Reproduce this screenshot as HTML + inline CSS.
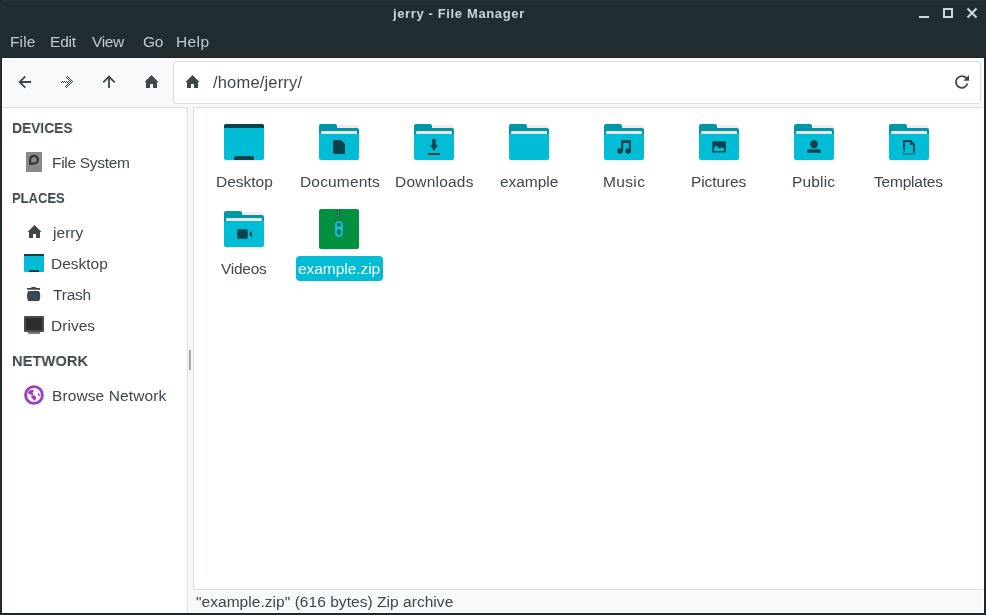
<!DOCTYPE html>
<html><head><meta charset="utf-8">
<style>
html,body{margin:0;padding:0;}
body{width:986px;height:615px;overflow:hidden;position:relative;background:#222d32;font-family:"Liberation Sans",sans-serif;}
.a{position:absolute;}
.t{position:absolute;white-space:nowrap;will-change:transform;}
#frame{left:1px;top:57px;width:984px;height:557px;background:#1a2328;}
#content{left:2px;top:58px;width:982px;height:555px;background:#fff;}
#toolbar{left:3px;top:59px;width:980px;height:48px;background:#f8f9fb;}
#entry{left:173px;top:61px;width:808px;height:43px;box-sizing:border-box;border:1px solid #dcdfe1;border-radius:3px;background:#fff;}
#side{left:2px;top:107px;width:185px;height:506px;background:#fff;}
#sidetop{left:3px;top:107px;width:185px;height:1px;background:#dcdfe1;}
#sideb{left:187px;top:107px;width:1px;height:506px;background:#dcdfe1;}
#gap{left:188px;top:107px;width:5px;height:506px;background:#f8f9fb;}
#handle{left:189px;top:350px;width:2px;height:20px;background:#a2a8ab;}
#view{left:193px;top:107px;width:790px;height:483px;background:#fff;border-left:1px solid #dcdfe1;border-top:1px solid #dcdfe1;border-bottom:1px solid #dcdfe1;box-sizing:border-box;}
#status{left:188px;top:590px;width:795px;height:22px;background:#f8f9fb;}
</style></head><body>
<svg width="0" height="0" style="position:absolute">
<defs>
<g id="fold">
<rect x="0.5" y="1" width="39" height="36" rx="2" fill="rgba(120,60,60,0.10)"/>
<path d="M0 2A2 2 0 0 1 2 0H16A2 2 0 0 1 18 2V4H38A2 2 0 0 1 40 6V12H0Z" fill="#0097a7"/>
<path d="M2 8A1 1 0 0 1 3 7H37A1 1 0 0 1 38 8V12H2Z" fill="#e7e5e5"/>
<path d="M0 10H40V34A2 2 0 0 1 38 36H2A2 2 0 0 1 0 34Z" fill="#00bcd4"/>
</g>
<path id="home" d="M7.5 1L0.5 8H2V14H6V10H9V14H13V8H14.5Z"/>
</defs>
</svg>
<div class="a" style="left:0;top:0;width:986px;height:1px;background:#2a353a"></div>
<div class="a" style="left:0;top:0;width:1px;height:1px;background:#000"></div>
<div class="a" style="left:985px;top:0;width:1px;height:1px;background:#000"></div>
<!-- window buttons -->
<div class="a" style="left:919px;top:16px;width:10px;height:2px;background:#d0d7da"></div>
<div class="a" style="left:943px;top:8px;width:10px;height:10px;box-sizing:border-box;border:2px solid #d0d7da"></div>
<svg class="a" style="left:966px;top:7px" width="12" height="12" viewBox="0 0 12 12"><path d="M1.5 1.5L10.5 10.5M10.5 1.5L1.5 10.5" stroke="#d0d7da" stroke-width="2" stroke-linecap="butt"/></svg>

<div class="a" id="frame"></div>
<div class="a" id="content"></div>
<div class="a" id="toolbar"></div>
<div class="a" id="entry"></div>

<!-- toolbar icons -->
<svg class="a" style="left:13px;top:70px" width="24" height="24" viewBox="0 0 24 24"><path d="M12.3 6.3L6.6 12L12.3 17.7M6.6 12H18" fill="none" stroke="#3d474d" stroke-width="1.8"/></svg>
<svg class="a" style="left:55px;top:70px" width="24" height="24" viewBox="0 0 24 24"><defs><pattern id="chk" patternUnits="userSpaceOnUse" width="2" height="2"><rect x="0" y="0" width="1" height="1" fill="#3d474d"/><rect x="1" y="1" width="1" height="1" fill="#3d474d"/></pattern></defs><path d="M11.2 6.6L16.6 12L11.2 17.4M16.6 12H6" fill="none" stroke="url(#chk)" stroke-width="2.4" shape-rendering="crispEdges"/></svg>
<svg class="a" style="left:97px;top:70px" width="24" height="24" viewBox="0 0 24 24"><path d="M6.3 12.3L12 6.6L17.7 12.3M12 6.6V18" fill="none" stroke="#3d474d" stroke-width="1.8"/></svg>
<svg class="a" style="left:144px;top:74px" width="15" height="14" viewBox="0 0 15 14"><use href="#home" fill="#3d474d"/></svg>
<svg class="a" style="left:185px;top:74px" width="15" height="14" viewBox="0 0 15 14"><use href="#home" fill="#3d474d"/></svg>
<svg class="a" style="left:950px;top:70px" width="24" height="24" viewBox="0 0 24 24"><path d="M16.4 8.2A5.9 5.9 0 1 0 17.5 13.6" fill="none" stroke="#3d474d" stroke-width="1.8"/><path d="M19 5V10.7H13.3Z" fill="#3d474d"/></svg>

<div class="a" id="side"></div>
<div class="a" id="sidetop"></div>
<div class="a" id="sideb"></div>
<div class="a" id="gap"></div>
<div class="a" id="handle"></div>
<div class="a" id="view"></div>
<div class="a" id="status"></div>

<!-- sidebar icons -->
<svg class="a" style="left:22px;top:148px" width="24" height="28" viewBox="0 0 24 28">
<rect x="4" y="4" width="16" height="20" fill="#8a8a8a"/>
<path d="M8.1 15.7V11.8A3.9 3.9 0 1 1 12 15.7Z" fill="none" stroke="#333" stroke-width="2.2"/>
</svg>
<svg class="a" style="left:27px;top:224px" width="15" height="14" viewBox="0 0 15 14"><use href="#home" fill="#3d474d"/></svg>
<svg class="a" style="left:24px;top:254px" width="20" height="18" viewBox="0 0 20 18">
<rect x="0" y="0" width="20" height="18" rx="1" fill="#00bcd4"/>
<path d="M0 1A1 1 0 0 1 1 0H19A1 1 0 0 1 20 1V2H0Z" fill="#06434d"/>
<path d="M5 18V17A1 1 0 0 1 6 16H14A1 1 0 0 1 15 17V18Z" fill="#06434d"/>
</svg>
<svg class="a" style="left:22px;top:282px" width="24" height="24" viewBox="0 0 24 24">
<path d="M9.2 6.1A1 1 0 0 1 10.2 4.9H13.1A1 1 0 0 1 14.1 6.1H18V7.8H5.1V6.1Z" fill="#3d484e"/>
<path d="M6.3 9H17A3 6 0 0 1 17 18.9H6.3A3 6 0 0 1 6.3 9Z" fill="#3d484e"/>
</svg>
<svg class="a" style="left:24px;top:316px" width="20" height="18" viewBox="0 0 20 18">
<rect x="0" y="0" width="20" height="16" rx="1" fill="#4b4b4b"/>
<rect x="2" y="2" width="16" height="12" fill="#2e2e2e"/>
<rect x="4.2" y="16" width="11.8" height="2" fill="#7b7b7b"/>
</svg>
<svg class="a" style="left:24px;top:385px" width="20" height="20" viewBox="0 0 20 20">
<circle cx="10" cy="10" r="8.4" fill="none" stroke="#9b40c4" stroke-width="2.9"/>
<path d="M4 7.4L5.8 5.3L9.2 4.6L9.7 6.5L8.3 7.6L9.7 9.2L8.8 10.1L6.5 9.7L4 8.1Z" fill="#9b40c4"/>
<path d="M7.1 11L9.7 10.1L11.9 11.5L12.2 13.8L10.6 15.6L9.7 16L9.2 14.2L7.6 12.9Z" fill="#9b40c4"/>
<path d="M14 7.8L15.6 9.2L16 11.5L14.4 10.6L13.8 9.2Z" fill="#9b40c4"/>
</svg>

<!-- view icons -->
<svg class="a" style="left:224px;top:124px" width="40" height="37" viewBox="0 0 40 37">
<rect x="0.5" y="1" width="39" height="36" rx="2" fill="rgba(120,60,60,0.12)"/>
<rect x="0" y="0" width="40" height="36" rx="2" fill="#00bcd4"/>
<path d="M0 2A2 2 0 0 1 2 0H38A2 2 0 0 1 40 2V4H0Z" fill="#06434d"/>
<path d="M10 36V34A2 2 0 0 1 12 32H28A2 2 0 0 1 30 34V36Z" fill="#06434d"/>
</svg>
<svg class="a" style="left:319px;top:124px" width="40" height="37" viewBox="0 0 40 37"><use href="#fold"/>
<path d="M14 17A1 1 0 0 1 15 16H22L26 20V29A1 1 0 0 1 25 30H15A1 1 0 0 1 14 29Z" fill="#06434d"/></svg>
<svg class="a" style="left:414px;top:124px" width="40" height="37" viewBox="0 0 40 37"><use href="#fold"/>
<path d="M18.2 15H21.8V21H24L20 27L16 21H18.2Z" fill="#06434d"/><rect x="14" y="29" width="12" height="2" fill="#06434d"/></svg>
<svg class="a" style="left:509px;top:124px" width="40" height="37" viewBox="0 0 40 37"><use href="#fold"/></svg>
<svg class="a" style="left:604px;top:124px" width="40" height="37" viewBox="0 0 40 37"><use href="#fold"/>
<path d="M17.2 27V17A1 1 0 0 1 18.2 16H25.9A1 1 0 0 1 26.9 17V27H24.8V19H19.2V27Z" fill="#06434d"/>
<circle cx="16" cy="27" r="2.8" fill="#06434d"/><circle cx="24.1" cy="27" r="2.8" fill="#06434d"/></svg>
<svg class="a" style="left:699px;top:124px" width="40" height="37" viewBox="0 0 40 37"><use href="#fold"/>
<rect x="13.2" y="17.2" width="13.7" height="11.4" rx="1" fill="#06434d"/>
<path d="M15 27V24L17.4 21.4L20.6 24.4L22.9 23.2L25 24.6V27Z" fill="#00bcd4"/></svg>
<svg class="a" style="left:794px;top:124px" width="40" height="37" viewBox="0 0 40 37"><use href="#fold"/>
<path d="M20 16.1C22.4 16.1 23.8 18 23.8 20.3C23.8 22.6 22 24.6 20 24.6C18 24.6 16.2 22.6 16.2 20.3C16.2 18 17.6 16.1 20 16.1Z" fill="#06434d"/>
<path d="M13.2 28.8V27C13.2 25.8 15.5 25.2 17.5 25.1C18.2 25.6 19 25.9 20 25.9C21 25.9 21.8 25.6 22.5 25.1C24.5 25.2 26.9 25.8 26.9 27V28.8Z" fill="#06434d"/></svg>
<svg class="a" style="left:889px;top:124px" width="40" height="37" viewBox="0 0 40 37"><use href="#fold"/>
<defs><pattern id="chk2" patternUnits="userSpaceOnUse" width="2" height="2"><rect x="0" y="0" width="1" height="1" fill="#06434d"/><rect x="1" y="1" width="1" height="1" fill="#06434d"/></pattern></defs>
<path d="M14 16H21.6L26 20.4V28.5H24.1V21.2L20.8 17.9H15.9V25H14Z" fill="#06434d"/>
<path d="M21 16V21H26V20.4L21.6 16Z" fill="#06434d"/>
<path d="M14 25H16V29H26V31H14Z" fill="url(#chk2)"/>
</svg>
<svg class="a" style="left:224px;top:211px" width="40" height="37" viewBox="0 0 40 37"><use href="#fold"/>
<rect x="13.2" y="18.2" width="10.5" height="9.5" rx="1.2" fill="#06434d"/>
<path d="M25 23.2L28 19.9V26.5Z" fill="#06434d"/></svg>
<svg class="a" style="left:319px;top:209px" width="40" height="41" viewBox="0 0 40 41">
<rect x="0.5" y="1" width="39" height="40" rx="2" fill="rgba(0,0,0,0.1)"/>
<rect x="0" y="0" width="40" height="40" rx="2" fill="#03913f"/>
<rect x="18.6" y="0" width="2.2" height="12" fill="#0a5a40"/>
<path d="M19 0h1v1h-1zM19 2h1v1h-1zM19 4h1v1h-1zM19 6h1v1h-1zM19 8h1v1h-1zM19 10h1v1h-1z" fill="#1ec0dc"/>
<rect x="16.4" y="12.6" width="7.6" height="16" rx="3.8" fill="#0a6a40" opacity="0.6"/>
<rect x="16.1" y="12.1" width="7.7" height="16" rx="3.85" fill="#17bfdc"/>
<ellipse cx="19.95" cy="15.6" rx="2.05" ry="1.95" fill="#0b7444"/>
<ellipse cx="19.95" cy="23" rx="2.05" ry="2.85" fill="#0b7444"/>
</svg>
<div class="a" style="left:296px;top:256px;width:87px;height:25px;background:#00bcd4;border-radius:4px"></div>

<div class="t" style="left:392.80px;top:7.00px;font-size:13px;line-height:13px;color:#cdd4d7;font-weight:bold;letter-spacing:0.632px;">jerry - File Manager</div>
<div class="t" style="left:9.68px;top:34.00px;font-size:15.5px;line-height:15.5px;color:#c4cacd;letter-spacing:0.107px;">File</div>
<div class="t" style="left:49.84px;top:34.00px;font-size:15.5px;line-height:15.5px;color:#c4cacd;letter-spacing:-0.213px;">Edit</div>
<div class="t" style="left:92.00px;top:34.00px;font-size:15.5px;line-height:15.5px;color:#c4cacd;letter-spacing:-0.373px;">View</div>
<div class="t" style="left:142.64px;top:34.00px;font-size:15.5px;line-height:15.5px;color:#c4cacd;letter-spacing:-0.400px;">Go</div>
<div class="t" style="left:176.04px;top:34.00px;font-size:15.5px;line-height:15.5px;color:#c4cacd;letter-spacing:0.373px;">Help</div>
<div class="t" style="left:212.68px;top:73.82px;font-size:16.5px;line-height:16.5px;color:#3d474c;letter-spacing:0.175px;">/home/jerry/</div>
<div class="t" style="left:12.20px;top:119.72px;font-size:15.5px;line-height:15.5px;color:#3d474c;font-weight:bold;transform:scaleX(0.8891);transform-origin:0 0;">DEVICES</div>
<div class="t" style="left:51.84px;top:155.00px;font-size:15.5px;line-height:15.5px;color:#3d474c;letter-spacing:-0.304px;">File System</div>
<div class="t" style="left:12.20px;top:189.72px;font-size:15.5px;line-height:15.5px;color:#3d474c;font-weight:bold;transform:scaleX(0.8381);transform-origin:0 0;">PLACES</div>
<div class="t" style="left:52.80px;top:225.00px;font-size:15.5px;line-height:15.5px;color:#3d474c;letter-spacing:0.040px;">jerry</div>
<div class="t" style="left:51.20px;top:256.00px;font-size:15.5px;line-height:15.5px;color:#3d474c;">Desktop</div>
<div class="t" style="left:52.80px;top:287.00px;font-size:15.5px;line-height:15.5px;color:#3d474c;letter-spacing:-0.200px;">Trash</div>
<div class="t" style="left:51.20px;top:318.00px;font-size:15.5px;line-height:15.5px;color:#3d474c;letter-spacing:0.032px;">Drives</div>
<div class="t" style="left:12.20px;top:353.00px;font-size:15.5px;line-height:15.5px;color:#3d474c;font-weight:bold;transform:scaleX(0.9488);transform-origin:0 0;">NETWORK</div>
<div class="t" style="left:52.20px;top:387.82px;font-size:15.5px;line-height:15.5px;color:#3d474c;letter-spacing:0.111px;">Browse Network</div>
<div class="t" style="left:215.72px;top:173.90px;font-size:15.5px;line-height:15.5px;color:#3d474c;">Desktop</div>
<div class="t" style="left:299.52px;top:173.90px;font-size:15.5px;line-height:15.5px;color:#3d474c;letter-spacing:0.160px;">Documents</div>
<div class="t" style="left:395.04px;top:173.90px;font-size:15.5px;line-height:15.5px;color:#3d474c;letter-spacing:0.220px;">Downloads</div>
<div class="t" style="left:500.32px;top:173.90px;font-size:15.5px;line-height:15.5px;color:#3d474c;letter-spacing:-0.053px;">example</div>
<div class="t" style="left:603.20px;top:173.90px;font-size:15.5px;line-height:15.5px;color:#3d474c;letter-spacing:0.360px;">Music</div>
<div class="t" style="left:691.36px;top:173.90px;font-size:15.5px;line-height:15.5px;color:#3d474c;letter-spacing:-0.114px;">Pictures</div>
<div class="t" style="left:792.20px;top:173.90px;font-size:15.5px;line-height:15.5px;color:#3d474c;letter-spacing:0.160px;">Public</div>
<div class="t" style="left:874.48px;top:173.90px;font-size:15.5px;line-height:15.5px;color:#3d474c;letter-spacing:-0.200px;">Templates</div>
<div class="t" style="left:220.52px;top:261.00px;font-size:15.5px;line-height:15.5px;color:#3d474c;letter-spacing:-0.256px;">Videos</div>
<div class="t" style="left:298.48px;top:260.82px;font-size:15.5px;line-height:15.5px;color:#ffffff;letter-spacing:-0.048px;">example.zip</div>
<div class="t" style="left:195.64px;top:593.72px;font-size:15.5px;line-height:15.5px;color:#3d474c;letter-spacing:0.044px;">"example.zip" (616 bytes) Zip archive</div>
</body></html>
